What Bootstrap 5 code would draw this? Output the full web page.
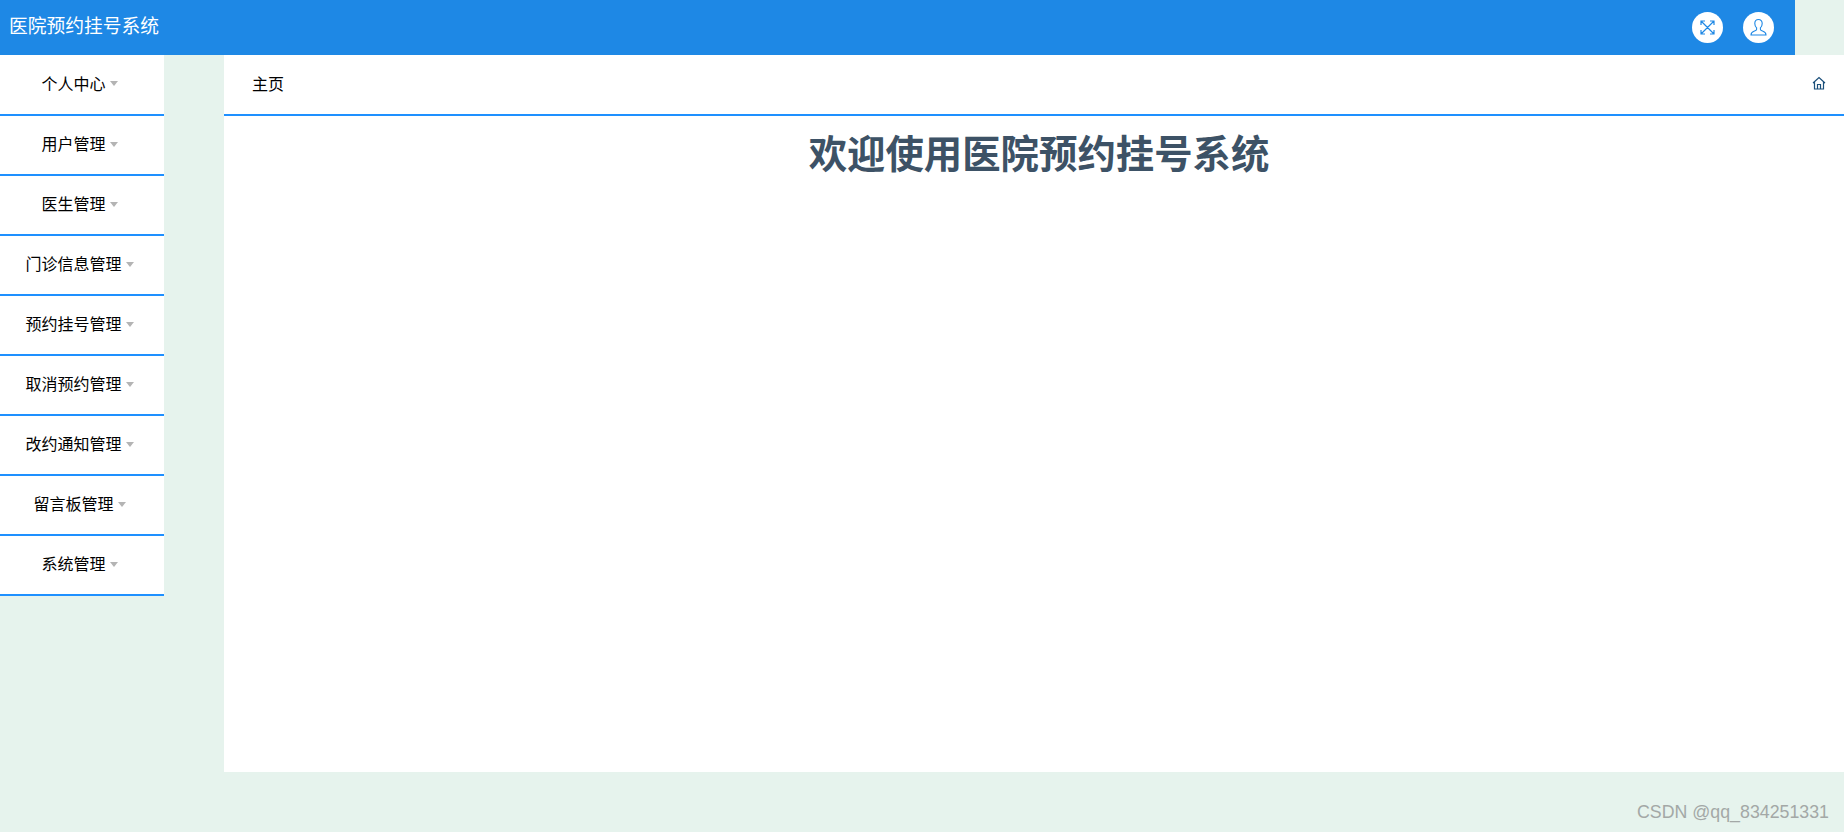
<!DOCTYPE html>
<html lang="zh-CN">
  <head>
    <meta charset="UTF-8" />
    <meta name="viewport" content="width=device-width, initial-scale=1.0" />
    <title>医院预约挂号系统</title>
    <link
      href="https://cdn.jsdelivr.net/npm/bootstrap@5.3.3/dist/css/bootstrap.min.css"
      rel="stylesheet"
    />
    <style>
      html,
      body {
        height: 100%;
      }

      body {
        background-color: #e6f3ed;
        font-family: "Noto Sans CJK SC", "Liberation Sans", sans-serif;
        font-size: 16px;
        color: #000;
        overflow: hidden;
      }

      .top-bar {
        width: 1795px;
        height: 55px;
        background-color: #1e88e5;
        padding: 0 21px 0 9px;
      }

      .top-title {
        font-size: 18.75px;
        color: #fff;
        margin-top: -4px;
      }

      .top-btn {
        width: 31px;
        height: 31px;
        background-color: #fff;
        color: #1e88e5;
      }

      .side-menu {
        width: 164px;
        flex: none;
      }

      .side-item {
        height: 60px;
        background-color: #fff;
        border-bottom: 2px solid #1e90ff;
        padding: 0 5px 4px 0;
      }

      .side-item:first-child {
        height: 61px;
      }

      .side-caret {
        width: 0;
        height: 0;
        margin: 2px 0 0 4px;
        border-left: 4.5px solid transparent;
        border-right: 4.5px solid transparent;
        border-top: 5px solid #b4b4b4;
      }

      .main-panel {
        width: 1620px;
        height: 717px;
        margin-left: 60px;
        background-color: #fff;
      }

      .crumb-bar {
        height: 61px;
        padding: 0 18px 3px 28px;
        border-bottom: 2px solid #1e90ff;
      }

      .welcome-title {
        font-size: 38.4px;
        font-weight: 700;
        line-height: 50px;
        color: #3d5266;
        margin: 10px 0 0;
        padding-left: 10px;
      }

      .water-mark {
        position: absolute;
        right: 15px;
        bottom: 6px;
        font-family: "Liberation Sans", sans-serif;
        font-size: 17.8px;
        color: #a3a8a6;
      }
    </style>
  </head>
  <body>
    <header class="top-bar d-flex align-items-center justify-content-between">
      <div class="top-title">医院预约挂号系统</div>
      <div class="d-flex gap-3 align-items-center">
        <span class="top-btn rounded-circle d-flex align-items-center justify-content-center me-1">
          <svg width="17" height="17" viewBox="0 0 17 17" fill="none" stroke="currentColor" stroke-width="1.2">
            <path d="M2 6V2h4M11 2h4v4M15 11v4h-4M6 15H2v-4M2 2l13 13M15 2L2 15" />
          </svg>
        </span>
        <span class="top-btn rounded-circle d-flex align-items-center justify-content-center">
          <svg width="19" height="19" viewBox="0 0 19 19" fill="none" stroke="currentColor" stroke-width="1.1">
            <path d="M9.5 1.5c-2.3 0-3.7 1.7-3.7 4 0 1.8.8 3.4 1.8 4.3v1.6c0 .8-1 1.3-2.6 1.9-1.7.6-3 1.3-3 3.7h15c0-2.4-1.3-3.1-3-3.7-1.6-.6-2.6-1.1-2.6-1.9V9.8c1-.9 1.8-2.5 1.8-4.3 0-2.3-1.4-4-3.7-4z" />
          </svg>
        </span>
      </div>
    </header>

    <div class="d-flex">
      <nav class="side-menu">
        <div class="side-item d-flex align-items-center justify-content-center">个人中心<span class="side-caret"></span></div>
        <div class="side-item d-flex align-items-center justify-content-center">用户管理<span class="side-caret"></span></div>
        <div class="side-item d-flex align-items-center justify-content-center">医生管理<span class="side-caret"></span></div>
        <div class="side-item d-flex align-items-center justify-content-center">门诊信息管理<span class="side-caret"></span></div>
        <div class="side-item d-flex align-items-center justify-content-center">预约挂号管理<span class="side-caret"></span></div>
        <div class="side-item d-flex align-items-center justify-content-center">取消预约管理<span class="side-caret"></span></div>
        <div class="side-item d-flex align-items-center justify-content-center">改约通知管理<span class="side-caret"></span></div>
        <div class="side-item d-flex align-items-center justify-content-center">留言板管理<span class="side-caret"></span></div>
        <div class="side-item d-flex align-items-center justify-content-center">系统管理<span class="side-caret"></span></div>
      </nav>

      <main class="main-panel">
        <div class="crumb-bar d-flex align-items-center justify-content-between">
          <span>主页</span>
          <svg width="14" height="14" viewBox="0 0 14 14" fill="none" stroke="#1b4f7a" stroke-width="1.2">
            <path d="M1 7l6-5.5L13 7M2.5 6v7h9V6M5.5 13V8.5h3V13" />
          </svg>
        </div>
        <h1 class="welcome-title text-center">欢迎使用医院预约挂号系统</h1>
      </main>
    </div>

    <div class="water-mark">CSDN @qq_834251331</div>

    <script src="https://cdn.jsdelivr.net/npm/bootstrap@5.3.3/dist/js/bootstrap.bundle.min.js"></script>
  </body>
</html>
